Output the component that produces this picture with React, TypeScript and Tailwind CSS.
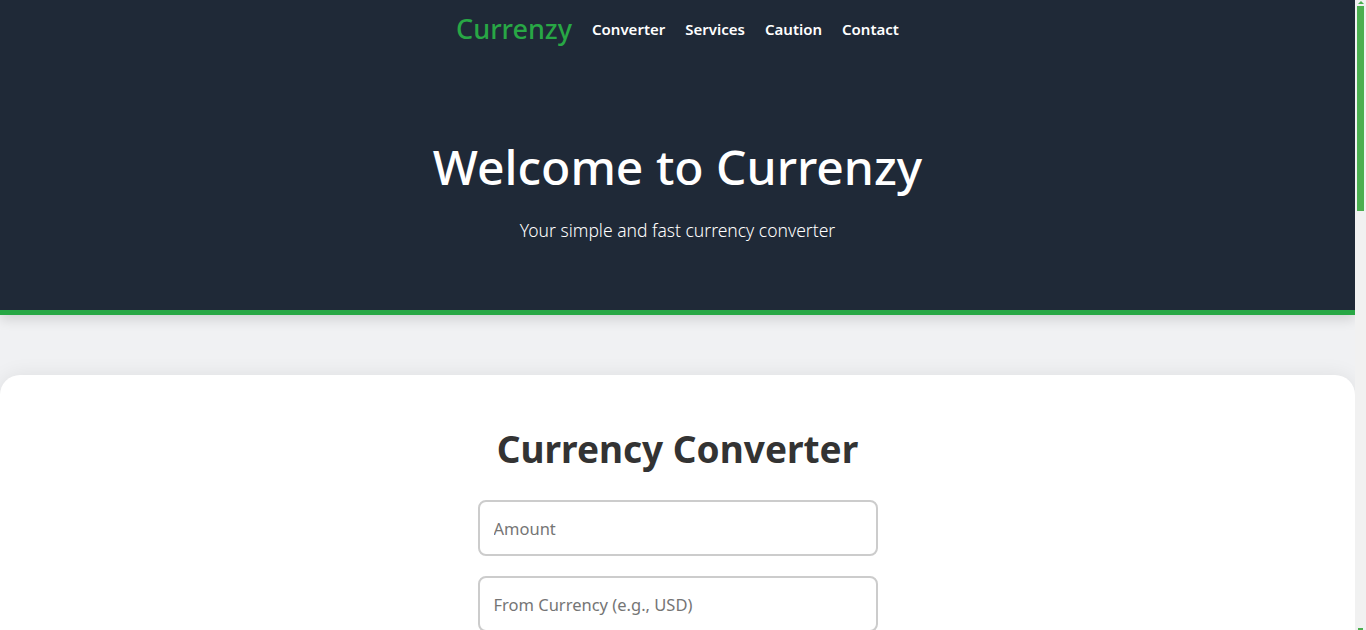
import React from "react";

const font = { fontFamily: '"Noto Sans", "Open Sans", sans-serif' };

function Header() {
  return (
    <header className="relative z-10 h-[315px] border-b-[5px] border-[#28a745] bg-[#1f2937] shadow-[0_4px_12px_rgba(0,0,0,0.14)]">
      <nav className="flex items-center justify-center gap-5 pt-[9px]">
        <span className="text-[27px] font-medium text-[#28a745]">Currenzy</span>
        <ul className="flex gap-5 text-[15px] font-semibold text-white">
          <li>Converter</li>
          <li>Services</li>
          <li>Caution</li>
          <li>Contact</li>
        </ul>
      </nav>
      <div className="mt-[86px] text-center text-white">
        <h1 className="text-[48px] font-medium leading-[1.3]">Welcome to Currenzy</h1>
        <p className="mt-[19px] text-[17.5px] font-light">Your simple and fast currency converter</p>
      </div>
    </header>
  );
}

function Field({ placeholder }: { placeholder: string }) {
  return (
    <input
      placeholder={placeholder}
      className="h-[56px] w-[400px] rounded-lg border-2 border-[#cccccc] bg-white px-[14px] text-[16.5px] text-[#333] placeholder:text-[#757575] outline-none"
      style={font}
    />
  );
}

function Scrollbar() {
  return (
    <div className="relative h-screen w-[11px] shrink-0 bg-[#f1f1f1]">
      <div className="mx-auto mt-[1px] h-0 w-0 border-x-[3px] border-b-[3px] border-x-transparent border-b-[#4caf50]" />
      <div className="ml-[2px] mt-[2px] h-[205px] w-[7px] bg-[#4caf50]" />
      <div className="absolute bottom-0 left-[3px] h-[2px] w-[5px] bg-[#4caf50]" />
    </div>
  );
}

export default function App() {
  return (
    <div className="flex h-screen overflow-hidden" style={font}>
      <div className="h-screen flex-1 overflow-hidden bg-[#f0f1f3]">
        <Header />
        <main className="mt-[60px] rounded-[20px] bg-white pb-20 pt-[52px] shadow-[0_0_20px_rgba(0,0,0,0.08)]">
          <h2 className="text-center text-[37px] font-bold leading-[1.2] text-[#333]">Currency Converter</h2>
          <form className="mt-[29px] flex flex-col items-center gap-[20px]">
            <Field placeholder="Amount" />
            <Field placeholder="From Currency (e.g., USD)" />
            <Field placeholder="To Currency (e.g., EUR)" />
            <button type="button" className="h-[52px] w-[400px] rounded-lg bg-[#28a745] text-[18px] font-semibold text-white">
              Convert
            </button>
            <p className="text-[20px] text-[#333]">Result will appear here</p>
          </form>
        </main>
      </div>
      <Scrollbar />
    </div>
  );
}
